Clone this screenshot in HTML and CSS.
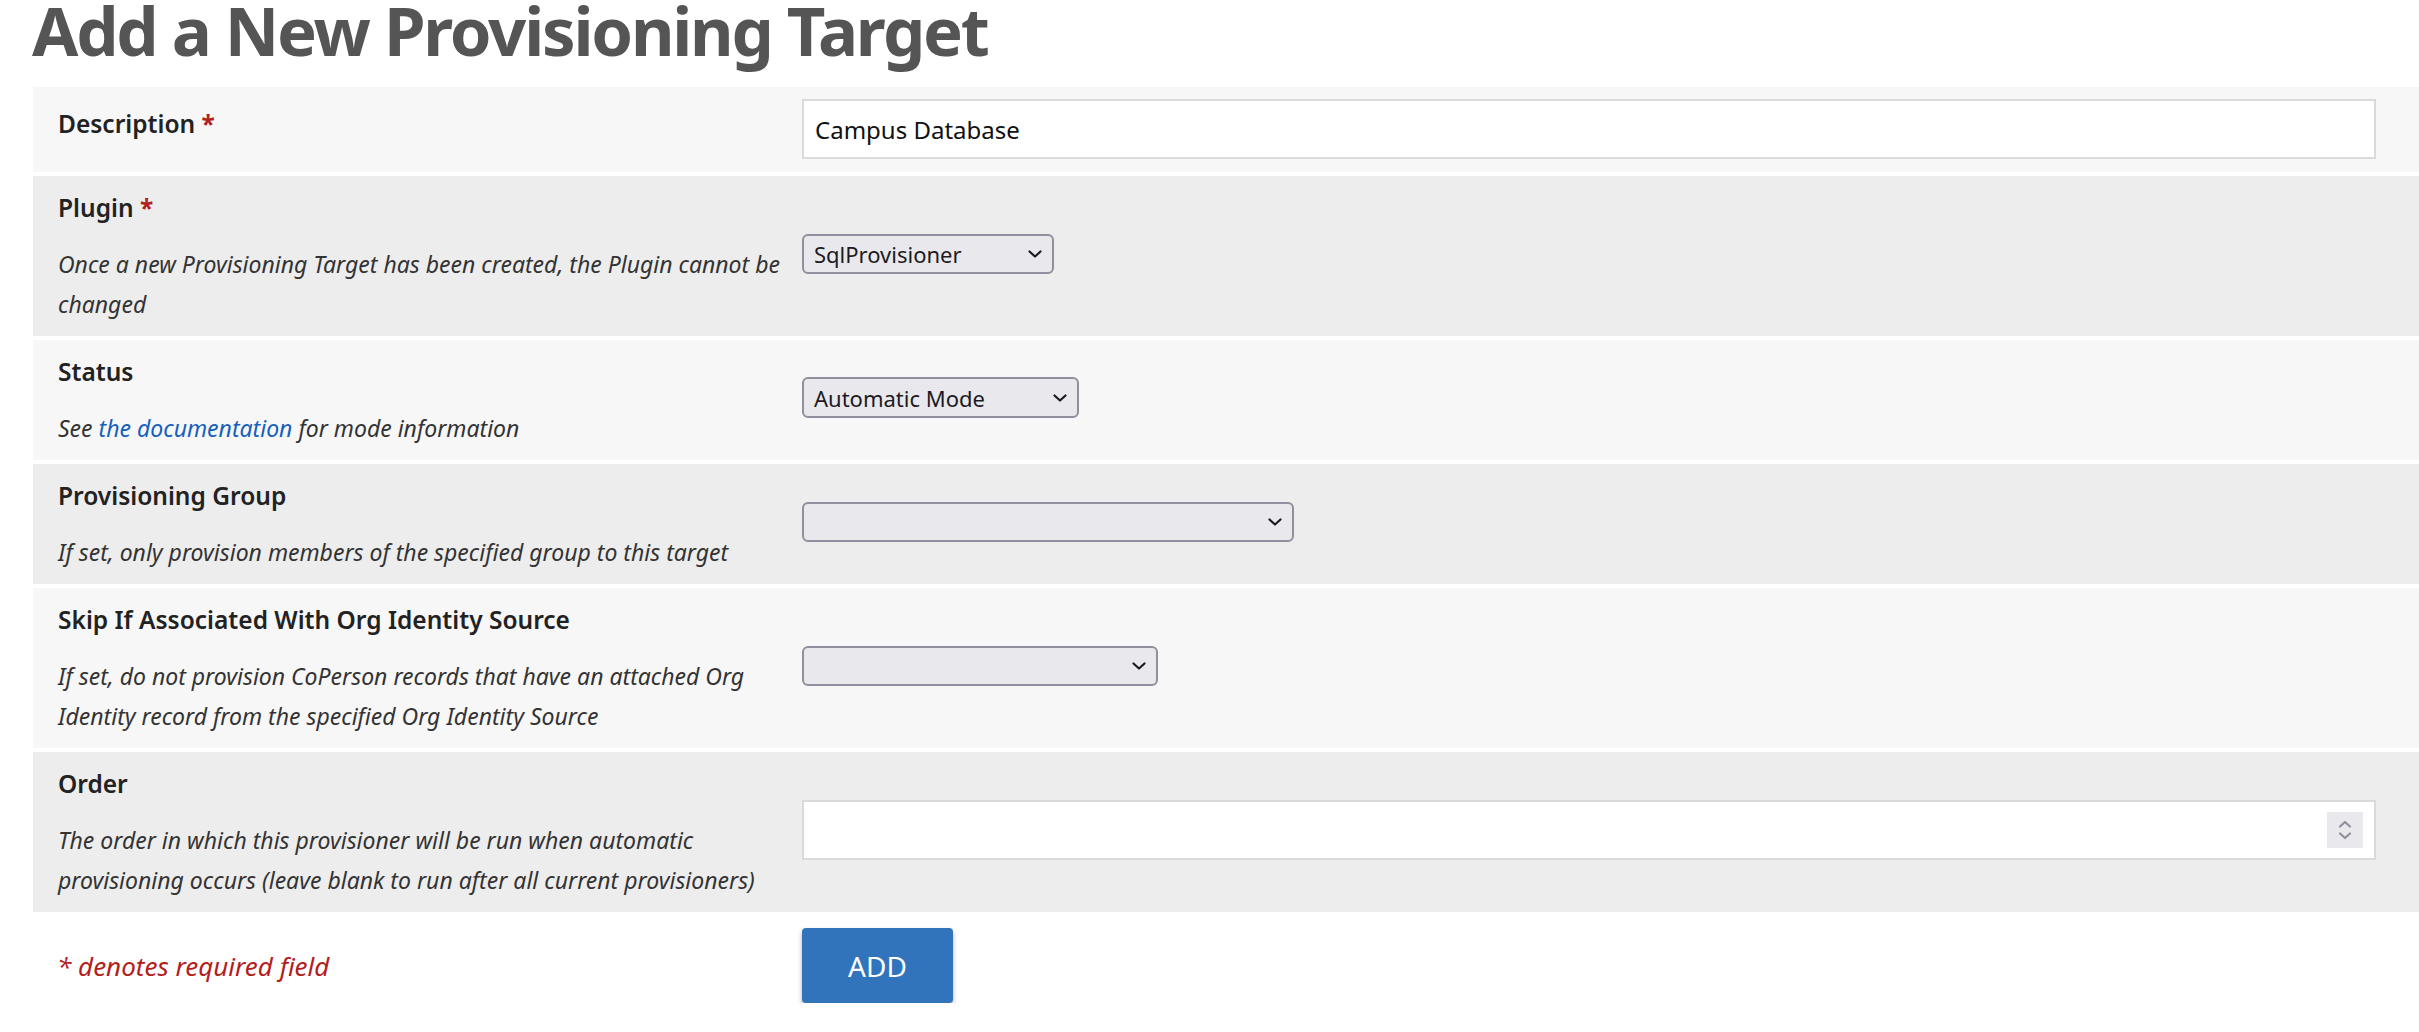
FILE: index.html
```html
<!DOCTYPE html>
<html lang="en">
<head>
<meta charset="utf-8">
<title>Add a New Provisioning Target</title>
<link rel="stylesheet" href="styles.css">
</head>
<body>
<h1 class="page-title">Add a New Provisioning Target</h1>
<form class="form">
  <div class="field-row odd first">
    <div class="field-name">
      <label class="label" for="desc">Description <span class="req">*</span></label>
    </div>
    <div class="field-info">
      <input id="desc" class="text-input" type="text" value="Campus Database">
    </div>
  </div>

  <div class="field-row even">
    <div class="field-name">
      <label class="label" for="plugin">Plugin <span class="req">*</span></label>
      <div class="desc">Once a new Provisioning Target has been created, the Plugin cannot be changed</div>
    </div>
    <div class="field-info">
      <div class="select select-plugin"><span class="select-text">SqlProvisioner</span><svg class="chev" viewBox="0 0 14 8" width="14" height="8"><path d="M1.5 1.5 L7 6.5 L12.5 1.5" fill="none" stroke="#1c1b22" stroke-width="2.2" stroke-linecap="round" stroke-linejoin="round"/></svg></div>
    </div>
  </div>

  <div class="field-row odd">
    <div class="field-name">
      <label class="label">Status</label>
      <div class="desc">See <a class="link" href="#">the documentation</a> for mode information</div>
    </div>
    <div class="field-info">
      <div class="select select-status"><span class="select-text">Automatic Mode</span><svg class="chev" viewBox="0 0 14 8" width="14" height="8"><path d="M1.5 1.5 L7 6.5 L12.5 1.5" fill="none" stroke="#1c1b22" stroke-width="2.2" stroke-linecap="round" stroke-linejoin="round"/></svg></div>
    </div>
  </div>

  <div class="field-row even">
    <div class="field-name">
      <label class="label">Provisioning Group</label>
      <div class="desc">If set, only provision members of the specified group to this target</div>
    </div>
    <div class="field-info">
      <div class="select select-group"><span class="select-text"></span><svg class="chev" viewBox="0 0 14 8" width="14" height="8"><path d="M1.5 1.5 L7 6.5 L12.5 1.5" fill="none" stroke="#1c1b22" stroke-width="2.2" stroke-linecap="round" stroke-linejoin="round"/></svg></div>
    </div>
  </div>

  <div class="field-row odd">
    <div class="field-name">
      <label class="label">Skip If Associated With Org Identity Source</label>
      <div class="desc">If set, do not provision CoPerson records that have an attached Org Identity record from the specified Org Identity Source</div>
    </div>
    <div class="field-info">
      <div class="select select-skip"><span class="select-text"></span><svg class="chev" viewBox="0 0 14 8" width="14" height="8"><path d="M1.5 1.5 L7 6.5 L12.5 1.5" fill="none" stroke="#1c1b22" stroke-width="2.2" stroke-linecap="round" stroke-linejoin="round"/></svg></div>
    </div>
  </div>

  <div class="field-row even">
    <div class="field-name">
      <label class="label" for="order">Order</label>
      <div class="desc">The order in which this provisioner will be run when automatic provisioning occurs (leave blank to run after all current provisioners)</div>
    </div>
    <div class="field-info">
      <div class="number-wrap">
        <input id="order" class="text-input number-input" type="text" value="">
        <span class="spinner"><svg viewBox="0 0 36 36" width="36" height="36"><path d="M13 14.5 L18 10 L23 14.5" fill="none" stroke="#8f8f9d" stroke-width="2.2" stroke-linecap="round" stroke-linejoin="round"/><path d="M13 21.5 L18 26 L23 21.5" fill="none" stroke="#8f8f9d" stroke-width="2.2" stroke-linecap="round" stroke-linejoin="round"/></svg></span>
      </div>
    </div>
  </div>

  <div class="submit-row">
    <div class="required-note">* denotes required field</div>
    <div class="submit-cell">
      <button class="btn-add" type="button">ADD</button>
    </div>
  </div>
</form>
</body>
</html>
```

FILE: styles.css
```css
html, body {
  margin: 0;
  padding: 0;
  background: #ffffff;
}

body {
  font-family: "Noto Sans", "Open Sans", sans-serif;
  color: #222222;
  overflow: hidden;
}

.page-title {
  margin: 0 0 27px 0;
  padding-left: 32px;
  font-size: 67px;
  line-height: 60px;
  letter-spacing: -2.2px;
  font-weight: 700;
  color: #555555;
  white-space: nowrap;
}

.form {
  margin-left: 33px;
  display: flex;
  flex-direction: column;
  gap: 4px;
}

.field-row {
  display: grid;
  grid-template-columns: 769px 1fr;
}

.field-row.odd { background: #f7f7f7; }
.field-row.even { background: #ededed; }

.field-name {
  padding: 15px 8px 12px 25px;
}

.field-row.first .field-name {
  padding-top: 20px;
}

.label {
  display: block;
  font-size: 24.5px;
  line-height: 34px;
  font-weight: 600;
  color: #222222;
}

.req {
  color: #b3201c;
  font-weight: 700;
}

.desc {
  margin-top: 19px;
  font-size: 23px;
  line-height: 40px;
  font-style: italic;
  color: #333333;
}

.link {
  color: #1560bd;
  text-decoration: none;
}

.field-info {
  display: flex;
  align-items: center;
  padding: 12px 43px 13px 0;
}

.text-input {
  box-sizing: border-box;
  width: 100%;
  height: 60px;
  border: 2px solid #dadada;
  background: #ffffff;
  padding: 0 11px;
  font-family: "Noto Sans", sans-serif;
  font-size: 24px;
  color: #111111;
  outline: none;
}

.select {
  box-sizing: border-box;
  height: 40px;
  margin-bottom: 4px;
  display: flex;
  align-items: center;
  justify-content: space-between;
  padding: 0 10px 0 10px;
  background: #e9e9ed;
  border: 2px solid #8f8f9d;
  border-radius: 6px;
  font-size: 22px;
  color: #1c1b22;
}

.select-plugin { width: 252px; }
.select-status { width: 277px; height: 41px; }
.select-group { width: 492px; }
.select-skip { width: 356px; }

.select-text {
  white-space: nowrap;
}

.chev {
  flex: none;
}

.number-wrap {
  position: relative;
  width: 100%;
  margin-bottom: 4px;
}

.spinner {
  position: absolute;
  right: 13px;
  top: 12px;
  width: 36px;
  height: 36px;
  background: #e9e9ed;
  display: block;
}

.spinner svg { display: block; }

.submit-row {
  display: grid;
  grid-template-columns: 769px 1fr;
  align-items: center;
  margin-top: 12px;
}

.required-note {
  padding-left: 24px;
  font-size: 26px;
  font-style: italic;
  color: #b3201c;
}

.btn-add {
  width: 151px;
  height: 75px;
  border: none;
  border-radius: 4px;
  background: #3174bb;
  color: #ffffff;
  font-family: "Noto Sans", sans-serif;
  font-size: 28px;
  box-shadow: 0 3px 5px rgba(0, 0, 0, 0.3);
}
```
